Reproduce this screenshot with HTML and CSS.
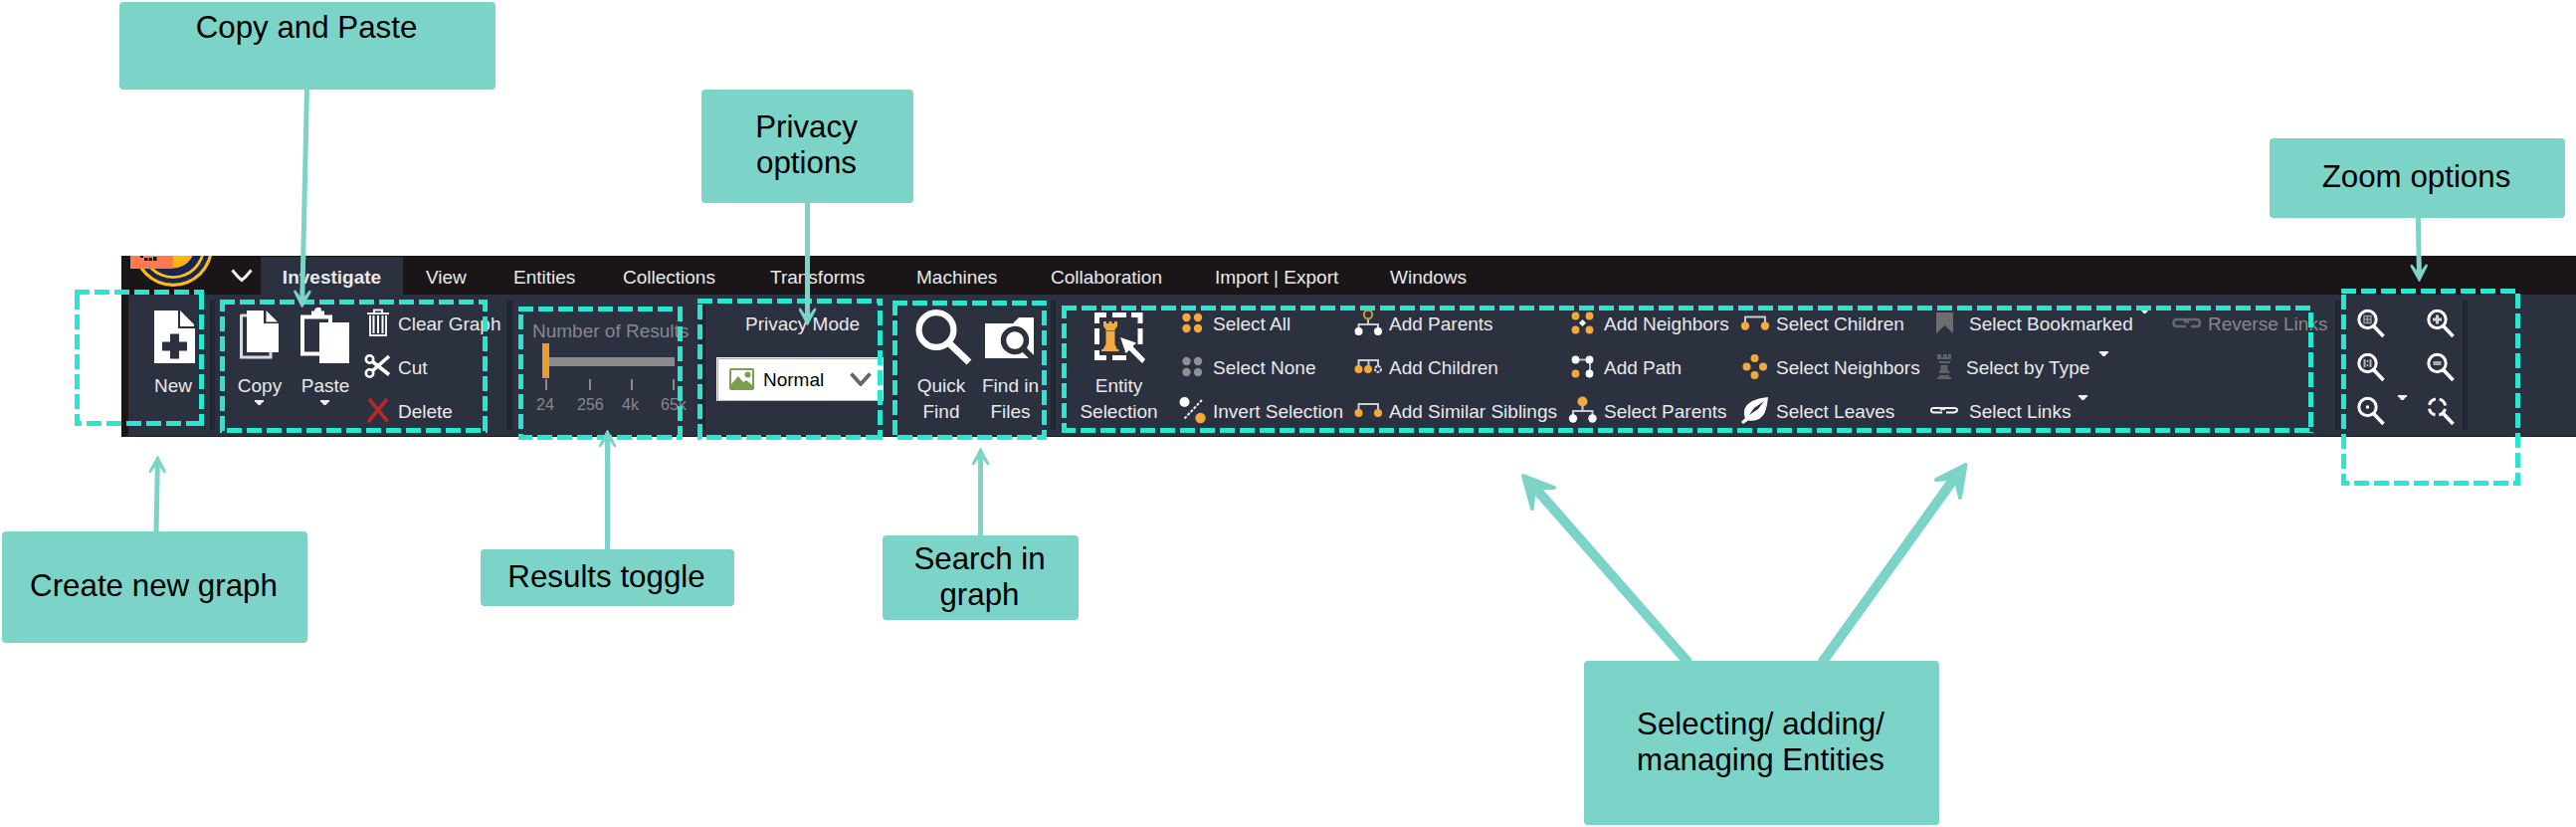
FILE: index.html
```html
<!DOCTYPE html>
<html lang="en">
<head>
<meta charset="utf-8">
<title>Investigate ribbon guide</title>
<link rel="stylesheet" href="styles.css">
</head>
<body>
<svg class="defs" aria-hidden="true">
  <symbol id="lens" viewBox="0 0 40 44">
    <circle cx="15.500" cy="17" r="8.700" fill="none" stroke="#fff" stroke-width="3"/>
    <path d="M22 24L31.500 34" stroke="#fff" stroke-width="3.600"/>
  </symbol>
  <symbol id="caret" viewBox="0 0 10 6"><path d="M0 0H9V2H8L5.500 5H3.500L1 2H0Z" fill="#f0f0f2"/></symbol>
  <symbol id="head" viewBox="-10 0 20 18" overflow="visible">
    <path d="M0 0Q1 0 1.500 2L8.700 15.500Q8.700 18 6.800 17.300L2.500 11.500H-2.500L-6.800 17.300Q-8.700 18 -8.700 15.500L-1.500 2Q-1 0 0 0Z" fill="#7cd4c8"/>
  </symbol>
  <symbol id="dots" viewBox="0 0 36 44"><circle cx="10.500" cy="15" r="4.200"/><circle cx="22" cy="15" r="4.200"/><circle cx="10.500" cy="26" r="4.200"/><circle cx="22" cy="26" r="4.200"/></symbol>
</svg>

<main class="ribbon">
  <nav class="tabs">
    <svg class="logo" viewBox="131 257 82 39">
      <circle cx="174" cy="248" r="40" fill="#fdbb14"/>
      <circle cx="174" cy="248" r="36.800" fill="#1a2650"/>
      <circle cx="174" cy="248" r="32" fill="#fdc410"/>
      <circle cx="174" cy="248" r="29.200" fill="#1a2650"/>
      <circle cx="174" cy="248" r="21.500" fill="#ffb40f"/>
      <path d="M131 257H174V270H131Z" fill="#ff7a50"/>
      <path d="M141 257h3v2h-3zM145 259h3.500v3H145zM149.500 259h3.500v3h-3.500zM154 258h3.500v4H154z" fill="#1a1617"/>
    </svg>
    <svg class="quick" viewBox="0 0 22 14"><path d="M1.500 1.500L7.500 8.500 11 11.500 14.500 8.500 20.500 1.500" fill="none" stroke="#f2f2f2" stroke-width="3"/></svg>
    <span class="tab active">Investigate</span>
    <span class="tab">View</span><span class="tab">Entities</span><span class="tab">Collections</span><span class="tab">Transforms</span><span class="tab">Machines</span><span class="tab">Collaboration</span><span class="tab">Import | Export</span><span class="tab">Windows</span>
  </nav>

  <div class="tools">
    <section class="group g-new">
      <div class="big"><svg viewBox="137 304 74 72"><path d="M155 312H179V330H196V365H155Z" fill="#fff"/><path d="M181 312L195 326V328H181Z" fill="#fff"/><path d="M171 335.500h9v8h8v9h-8v8h-9v-8h-8v-9h8z" fill="#2b313f"/></svg><span>New</span></div>
    </section>

    <section class="group g-edit">
      <div class="big"><svg viewBox="231 304 60 72"><path d="M242 317H248M242.500 316V359H272V353" fill="none" stroke="#d9dbde" stroke-width="3"/><path d="M248 312H265V325H280V354H248Z" fill="#fff"/><path d="M267.500 312L279 323.500H267.500Z" fill="#fff"/></svg><span>Copy</span><svg class="drop"><use href="#caret" width="10" height="6"/></svg></div>
      <div class="big"><svg viewBox="297 304 60 72"><path d="M304 318.500H332V328M304 316.500V355.500H322" fill="none" stroke="#fff" stroke-width="4"/><path d="M313 317V312.500H316Q316 309 320 309H322Q323 310 323 312.500H326V317Z" fill="#fff"/><path d="M321 324H351V365H321Z" fill="#fff"/></svg><span>Paste</span><svg class="drop"><use href="#caret" width="10" height="6"/></svg></div>
      <ul class="list">
        <li><svg viewBox="0 0 36 44"><path d="M5 11H27M12 10V7.500H20V10M8 13V33H24V13" fill="none" stroke="#eee" stroke-width="2"/><path d="M11.500 13V31M16 13V31M20.500 13V31" stroke="#fff" stroke-width="2"/></svg>Clear Graph</li>
        <li><svg viewBox="0 0 36 44"><g fill="none" stroke="#fff" stroke-width="2.600"><circle cx="7.500" cy="13" r="3.700"/><circle cx="7.500" cy="27" r="3.700"/><path d="M10.500 15.500L27 28.500M10.500 24.500L27 10" stroke-width="3.600"/></g></svg>Cut</li>
        <li><svg viewBox="0 0 36 44"><path d="M7 9L25.500 31.500M25 9L6 32" stroke="#b32b23" stroke-width="3.600"/></svg>Delete</li>
      </ul>
    </section>

    <section class="group g-results">
      <h2>Number of Results</h2>
      <svg class="slider" viewBox="536 345 155 48"><path d="M552 359H678V368H552Z" fill="#8b8b8b"/><path d="M545 345H552V380H545Z" fill="#e89d30"/><path d="M549 381V392M593 381V392M635 381V392M677 381V392" stroke="#8b8b8b" stroke-width="2"/></svg>
      <div class="scale"><span>24</span><span>256</span><span>4k</span><span>65k</span></div>
    </section>

    <section class="group g-privacy">
      <h2>Privacy Mode</h2>
      <div class="select">
        <svg class="picture" viewBox="0 0 25 22"><rect x="1" y="1" width="23" height="20" rx="1" fill="#fff" stroke="#79a04c" stroke-width="2"/><path d="M2 20V16L9 8L14 14L17 12L23 17V20Z" fill="#79a04c"/><circle cx="18.500" cy="6.500" r="3" fill="#79a04c"/></svg>
        <span>Normal</span>
        <svg class="arrow" viewBox="0 0 22 14"><path d="M1.500 1.500L11 12 20.500 1.500" fill="none" stroke="#666" stroke-width="3.800"/></svg>
      </div>
    </section>

    <section class="group g-find">
      <div class="big"><svg viewBox="911 304 70 72"><circle cx="941" cy="331.500" r="17.400" fill="none" stroke="#fff" stroke-width="6.200"/><path d="M954 345L974 364" stroke="#fff" stroke-width="7"/></svg><span>Quick<br>Find</span></div>
      <div class="big"><svg viewBox="981 304 69 72"><path d="M990 325H1018L1024 319H1039V360H990Z" fill="#fff"/><circle cx="1020" cy="342" r="11.500" fill="#fff" stroke="#2b313f" stroke-width="5.500"/><path d="M1028 350L1041 363" stroke="#2b313f" stroke-width="6"/></svg><span>Find in<br>Files</span></div>
    </section>

    <section class="group g-entities">
      <div class="big"><svg viewBox="1075 304 99 72"><path d="M1102.500 325V316.500H1112M1118 316.500H1132M1137 316.500H1146V325M1146 330V346M1102.500 330V346M1102.500 352V359.500H1112M1118 359.500H1132" fill="none" stroke="#fff" stroke-width="5"/><path d="M1109 323H1112V325H1114.500V323H1117.500V325H1120V323H1123V328L1120.500 331V346L1122.500 350V351H1124.500V353H1107V351H1109V350L1111.500 346V331L1109 328Z" fill="#f5a93d"/><path d="M1111 332.500H1121" stroke="#8a6a3d" stroke-width="1"/><path d="M1126 339L1142 344.500 1138.500 348 1151 361 1148 365 1135 352 1131.500 355Z" fill="#fff"/></svg><span>Entity<br>Selection</span></div>
      <ul class="list">
        <li><svg viewBox="0 0 36 44" fill="#f5a93d"><use href="#dots" width="36" height="44"/></svg>Select All</li>
        <li><svg viewBox="0 0 36 44" fill="#909092"><use href="#dots" width="36" height="44"/></svg>Select None</li>
        <li><svg viewBox="0 0 36 44"><circle cx="8.500" cy="12" r="5" fill="#fff"/><circle cx="24.500" cy="28" r="5.200" fill="#f5a93d"/><path d="M8.500 28.500L26 10" stroke="#eee" stroke-width="2" stroke-dasharray="3 1.500"/></svg>Invert Selection</li>
      </ul>
      <ul class="list">
        <li><svg viewBox="0 0 36 44"><path d="M16 17V22M6.500 28V22H26V28" fill="none" stroke="#c9cbce" stroke-width="2"/><circle cx="16" cy="12" r="4.200" fill="none" stroke="#d0933d" stroke-width="2"/><circle cx="6.500" cy="29" r="4" fill="#fff"/><circle cx="26" cy="29" r="4" fill="#fff"/></svg>Add Parents</li>
        <li><svg viewBox="0 0 36 44"><path d="M6.500 22V14H26V20M16.500 14V22" fill="none" stroke="#c9cbce" stroke-width="2"/><circle cx="6.500" cy="23" r="4" fill="#f5a93d"/><circle cx="16" cy="23" r="4" fill="#f5a93d"/><circle cx="26" cy="23" r="3" fill="none" stroke="#ddd" stroke-width="2" stroke-dasharray="2.500 1"/></svg>Add Children</li>
        <li><svg viewBox="0 0 36 44"><path d="M6.500 22V14H26V22" fill="none" stroke="#c9cbce" stroke-width="2"/><circle cx="6.500" cy="23" r="4" fill="#f5a93d"/><circle cx="26" cy="23" r="4" fill="#f5a93d"/></svg>Add Similar Siblings</li>
      </ul>
      <ul class="list">
        <li><svg viewBox="0 0 36 44" fill="#f5a93d"><circle cx="8.500" cy="13.500" r="3.900"/><circle cx="22.500" cy="13.500" r="3.900"/><circle cx="8.500" cy="27.500" r="3.900"/><circle cx="22.500" cy="27.500" r="3.900"/><path d="M15.500 17L19 20.500 15.500 24 12 20.500Z" fill="#fff"/></svg>Add Neighbors</li>
        <li><svg viewBox="0 0 36 44"><path d="M8.500 13.500H23V27" fill="none" stroke="#b9bbc0" stroke-width="2"/><circle cx="8.500" cy="13.500" r="3.900" fill="#fff"/><circle cx="22.500" cy="13.500" r="3.900" fill="#fff"/><circle cx="22.500" cy="27.500" r="3.900" fill="#fff"/><circle cx="8.500" cy="27.500" r="3.900" fill="#f5a93d"/></svg>Add Path</li>
        <li><svg viewBox="0 0 36 44"><path d="M15.500 14V21M6 28V21H25.500V28" fill="none" stroke="#c9cbce" stroke-width="2"/><circle cx="15.500" cy="11.500" r="5" fill="#f5a93d"/><circle cx="6" cy="28.500" r="4.200" fill="#fff"/><circle cx="25.500" cy="28.500" r="4.200" fill="#fff"/></svg>Select Parents</li>
      </ul>
      <ul class="list">
        <li><svg viewBox="0 0 36 44"><path d="M6 22V14.500H26V22" fill="none" stroke="#c9cbce" stroke-width="2"/><circle cx="6" cy="23.500" r="4.200" fill="#f5a93d"/><circle cx="26" cy="23.500" r="4.200" fill="#f5a93d"/></svg>Select Children</li>
        <li><svg viewBox="0 0 36 44" fill="#f5a93d"><circle cx="15.500" cy="12" r="4"/><circle cx="7.500" cy="20.500" r="4"/><circle cx="24" cy="20.500" r="4"/><circle cx="15.500" cy="29" r="4"/></svg>Select Neighbors</li>
        <li><svg viewBox="0 0 36 44"><path d="M29 7Q9 9 5.500 19Q4 24 6 28L2 32L4 34L9 30.500Q21 32 25.500 23Q28 17 29 7Z" fill="#fff"/><path d="M10 25L15 18L25 11L19 19Z" fill="#2b313f"/></svg>Select Leaves</li>
      </ul>
      <ul class="list wide">
        <li><svg viewBox="0 0 43 44"><path d="M10 10H27V31L18.500 23L10 31Z" fill="#6e6e70"/></svg>Select Bookmarked<svg class="mark"><use href="#caret" width="10" height="6"/></svg></li>
        <li class="by-type"><svg viewBox="0 0 43 44"><path d="M11 8h4v3h2v-3h4v3h1v-3h3v5H11zM13 15h11v2H13zM14.500 19h7v4l2.500 4H12.500L14.500 23zM11 31h2v-2h10v2h2v2H11z" fill="#606164"/></svg>Select by Type<svg class="mark"><use href="#caret" width="10" height="6"/></svg></li>
        <li><svg viewBox="0 0 43 44"><path d="M16 22.500H8Q5 22.500 5 20T8 18H15Q18 18 18 20M15 20.500Q15 18 18 18H28Q31 18 31 20T28 22.500H20" fill="none" stroke="#f4f4f4" stroke-width="2"/></svg>Select Links<svg class="mark"><use href="#caret" width="10" height="6"/></svg></li>
      </ul>
      <ul class="list muted">
        <li><svg viewBox="0 0 36 44"><path d="M15 24H6Q2.500 24 2.500 20.500T6 17H13Q17 17 17 20.500M14 20.500Q14 17 18 17H26Q29 17 29 20.500T26 24H20" fill="none" stroke="#68696c" stroke-width="2.600"/></svg>Reverse Links</li>
      </ul>
    </section>

    <section class="group g-zoom">
      <svg viewBox="0 0 70 44"><use href="#lens" width="40" height="44"/><path d="M12 13.500H19V20.500H12ZM15.500 13.500V20.500M12 17H19" fill="none" stroke="#9b9da4" stroke-width="1.400"/></svg>
      <svg viewBox="0 0 70 44"><use href="#lens" width="40" height="44"/><path d="M15.500 12.500V21.500M11 17H20" stroke="#d2d3d7" stroke-width="3"/></svg>
      <svg viewBox="0 0 70 44"><use href="#lens" width="40" height="44"/><path d="M12.500 13V21M18.500 13V21" stroke="#b5b7bb" stroke-width="2"/><path d="M15.500 14v2m0 2v2" stroke="#b5b7bb" stroke-width="1.600"/></svg>
      <svg viewBox="0 0 70 44"><use href="#lens" width="40" height="44"/><path d="M11.500 17H19.500" stroke="#aaacb3" stroke-width="4"/></svg>
      <svg viewBox="0 0 70 44"><use href="#lens" width="40" height="44"/><path d="M14 15.500h3v3h-3z" fill="#fff"/><use href="#caret" x="46" y="5" width="10" height="6"/></svg>
      <svg viewBox="0 0 70 44"><circle cx="15.500" cy="17" r="8.200" fill="none" stroke="#fff" stroke-width="3" stroke-dasharray="8.900 4" stroke-dashoffset="-2"/><path d="M22 24L31.500 34" stroke="#fff" stroke-width="3.600"/></svg>
    </section>
    <div class="group g-rest"></div>
  </div>
</main>

<!-- dashed frames and arrows lying over the ribbon -->
<svg class="overlay" viewBox="0 0 2589 831">
  <g class="frame">
    <path d="M75 293.500H205"/><path d="M77.500 296V428"/><path d="M202.500 296V428"/><path d="M75 425.500H205" stroke-dashoffset="8"/>
    <path d="M221 303.500H490"/><path d="M223.500 301V435" stroke-dashoffset="3"/><path d="M487.500 301V435" stroke-dashoffset="3"/><path d="M221 432.500H490" stroke-dashoffset="13"/>
    <path d="M521 310.500H686"/><path d="M523.500 316V442"/><path d="M683.500 308V442"/><path d="M521 439.500H686" stroke-dashoffset="1"/>
    <path d="M701 302.500H887"/><path d="M703.500 306V442"/><path d="M884.500 300V442" stroke-dashoffset="8"/><path d="M701 439.500H887" stroke-dashoffset="11"/>
    <path d="M897 304.500H1052"/><path d="M899.500 302V442"/><path d="M1049.500 302V442" stroke-dashoffset="10"/><path d="M902 439.500H1052"/>
    <path d="M1067 309.500H2325"/><path d="M1069.500 307V435" stroke-dashoffset="2"/><path d="M2322.500 314V435"/><path d="M1067 432.500H2321" stroke-dashoffset="1"/>
    <path d="M2353 292.500H2533"/><path d="M2355.500 296V488"/><path d="M2530.500 295V488"/><path d="M2353 485.500H2533" stroke-dashoffset="7"/>
  </g>
  <g class="shafts">
    <path d="M308.500 89L303.800 300M811.500 203V316M157 535L158.300 468M610.500 553V443M985.500 539V461M2430.300 218L2431.400 274"/>
    <path d="M1697 666L1540 487M1831 666L1969 474" stroke-width="10"/>
    <path d="M1531 478L1562 490 1548 490 1541 498 1540 511ZM1975.500 467L1946 482 1960 481 1967 487 1970 500Z" fill="#7cd4c8" stroke-width="4" stroke-linejoin="round"/>
  </g>
  <use href="#head" width="20" height="18" x="-10" transform="translate(303.600 309) rotate(181)"/>
  <use href="#head" width="20" height="18" x="-10" transform="translate(811.500 327) rotate(180)"/>
  <use href="#head" width="20" height="18" x="-10" transform="translate(158.500 458) rotate(1)"/>
  <use href="#head" width="20" height="18" x="-10" transform="translate(610.500 432)"/>
  <use href="#head" width="20" height="18" x="-10" transform="translate(985.500 450)"/>
  <use href="#head" width="20" height="18" x="-10" transform="translate(2431.500 283) rotate(179)"/>
</svg>

<div class="note n-copy">Copy and Paste</div>
<div class="note n-privacy">Privacy<br>options</div>
<div class="note n-zoom">Zoom options</div>
<div class="note n-create">Create new graph</div>
<div class="note n-results">Results toggle</div>
<div class="note n-search">Search in<br>graph</div>
<div class="note n-select">Selecting/ adding/<br>managing Entities</div>
</body>
</html>
```
FILE: styles.css
```css
* { box-sizing: border-box; }
body {
  position: relative;
  margin: 0;
  width: 2589px;
  height: 831px;
  padding: 257px 0 0 122px;
  overflow: hidden;
  background: #fff;
  font-family: "Liberation Sans", Arial, sans-serif;
  font-size: 19px;
  color: #e9e9ec;
}
svg { display: block; flex: none; }
.defs { position: absolute; width: 0; height: 0; }
ul, h2 { margin: 0; padding: 0; list-style: none; font-weight: normal; font-size: inherit; }

.ribbon { height: 182px; background: #1a1617; }
.tabs {
  display: grid;
  grid-template-columns: 82px 49px 143px 111px 110px 148px 147px 135px 165px 176px 100px;
  height: 39px;
  padding-left: 9px;
  line-height: 39px;
  white-space: nowrap;
}
.tabs .tab:nth-child(4) { padding-left: 23px; }
.logo { width: 82px; height: 39px; }
.quick { width: 22px; height: 14px; margin: 13px 0 0 19px; }
.tab { padding-top: 2px; }
.active { margin-top: 1px; padding-top: 1px; background: #2b313f; text-align: center; font-weight: bold; }

.tools { display: flex; height: 142px; margin-left: 7px; background: #2b313f; }
.group { display: flex; flex: none; padding-top: 8px; white-space: nowrap; }
.group + .group::before {
  content: "";
  flex: none;
  width: 5px;
  height: 130px;
  margin-top: -2px;
  background: linear-gradient(90deg, #1b212d 0 1px, #232936 1px 2px, #1b212d 2px 3px, #232936 3px 4px, #1b212d 4px);
}
.g-new { width: 82px; padding-left: 8px; }
.g-edit { width: 299px; }
.g-results { width: 194px; }
.g-privacy { width: 194px; }
.g-find { width: 158px; }
.g-entities { width: 1291px; }
.g-zoom { width: 128px; }

.big { display: flex; flex-direction: column; align-items: center; line-height: 26px; text-align: center; }
.big > svg:first-child { height: 72px; }
.big > span { margin: -1px 0 1px; }
.g-new .big { width: 74px; }
.g-edit .big { width: 60px; }
.g-edit .big:first-child { margin-left: 15px; }
.g-edit .big + .big { margin-left: 6px; }
.g-edit .list { margin-left: 7px; }
.drop { width: 10px; height: 6px; }
.g-find .big { width: 70px; }
.g-find .big:first-child { margin-left: 8px; }
.g-find .big + .big { width: 69px; }
.g-entities .big { width: 99px; margin: 0 8px 0 14px; }

.list { flex: none; line-height: 44px; }
.list li { display: flex; height: 44px; }
.list li > svg:first-child { width: 36px; height: 44px; }
.list.wide li > svg:first-child { width: 43px; }
.g-entities .list:nth-child(2) { width: 177px; }
.g-entities .list:nth-child(3) { width: 216px; }
.g-entities .list:nth-child(4) { width: 173px; }
.g-entities .list:nth-child(5) { width: 188px; }
.g-entities .list:nth-child(6) { width: 246px; }
.g-entities .list:not(.wide) li > svg:first-child { margin-right: 1px; }
.list .by-type svg:first-child { margin-right: -3px; }
.mark { width: 10px; height: 6px; margin: 5px 0 0 8px; }
.list li:first-child .mark { margin: 6px 0 0 7px; }
.by-type .mark { margin-left: 10px; }
.muted, .g-results { color: #88888a; }

.g-results { display: grid; grid-template-columns: 5px 1fr; grid-template-rows: 41px 48px 38px; align-items: start; }
.g-results::before { grid-row: 1 / 4; }
.g-results h2 { padding-left: 20px; line-height: 58px; height: 41px; }
.g-results .slider { grid-column: 2; width: 155px; height: 48px; margin-left: 21px; }
.scale {
  grid-column: 2;
  display: grid;
  grid-template-columns: 41px 45px 39px 40px;
  padding-left: 24px;
  font-size: 16px;
  line-height: 27px;
}
.g-privacy { display: grid; grid-template-columns: 5px 1fr; grid-template-rows: 55px 44px; align-items: start; }
.g-privacy::before { grid-row: 1 / 3; }
.g-privacy h2 { padding-left: 40px; line-height: 44px; }
.select {
  grid-column: 2;
  display: flex;
  align-items: center;
  width: 168px;
  height: 44px;
  margin-left: 11px;
  padding-left: 12px;
  border: 1px solid #fff;
  border-bottom-color: #bbb;
  background: #fff;
  box-shadow: inset 1px 1px #aaa;
  color: #000;
}
.picture { width: 25px; height: 22px; margin-right: 9px; }
.select span { width: 87px; padding-top: 2px; }
.arrow { width: 22px; height: 14px; }

.g-zoom { display: grid; grid-template-columns: 17px 70px 41px; grid-template-rows: repeat(3, 44px); }
.g-zoom::before { grid-row: 1 / 4; }
.g-zoom > svg { width: 70px; height: 44px; }

.overlay { position: absolute; left: 0; top: 0; width: 2589px; height: 831px; }
.frame { fill: none; stroke: #28e7d1; stroke-width: 5; stroke-dasharray: 15 5; }
.shafts { fill: none; stroke: #7cd4c8; stroke-width: 5; }
.note {
  position: absolute;
  display: flex;
  align-items: center;
  justify-content: center;
  padding: 0 2px 2px 0;
  border-radius: 4px;
  background: #7cd4c8;
  color: #000;
  font-size: 31.3px;
  line-height: 36px;
  text-align: center;
  white-space: nowrap;
}
.n-copy { left: 120px; top: 2px; width: 378px; height: 88px; padding: 0 2px 36px 0; }
.n-privacy { left: 705px; top: 90px; width: 213px; height: 114px; }
.n-zoom { left: 2281px; top: 139px; width: 297px; height: 80px; }
.n-create { left: 2px; top: 534px; width: 307px; height: 112px; }
.n-results { left: 483px; top: 552px; width: 255px; height: 57px; }
.n-search { left: 887px; top: 538px; width: 197px; height: 85px; }
.n-select { left: 1592px; top: 664px; width: 357px; height: 165px; }
```
